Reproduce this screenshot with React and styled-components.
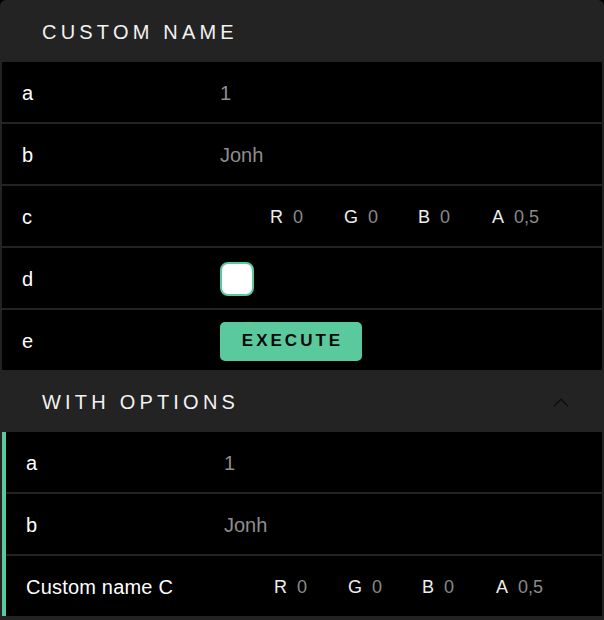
import React from 'react';
import styled, { createGlobalStyle } from 'styled-components';

const GlobalStyle = createGlobalStyle`
  html, body {
    margin: 0;
    background: #000;
  }
  body {
    font-family: "Liberation Sans", Arial, sans-serif;
  }
`;

const GREEN = '#5bc99e';

const Panel = styled.div`
  background: #232323;
  border-radius: 6px 6px 0 0;
  padding: 0 2px 4px;
  width: 604px;
  box-sizing: border-box;
`;

const Header = styled.div`
  height: 62px;
  box-sizing: border-box;
  display: flex;
  align-items: center;
  justify-content: space-between;
  padding: 2px 33px 0 40px;
`;

const Title = styled.span`
  color: #f2f2f2;
  font-size: 20px;
  letter-spacing: 4.2px;
  text-transform: uppercase;
`;

const Rows = styled.div`
  display: flex;
  flex-direction: column;
  gap: 2px;
  border-left: ${p => (p.accent ? `4px solid ${GREEN}` : 'none')};
`;

const Row = styled.div`
  height: 60px;
  box-sizing: border-box;
  background: #000;
  display: grid;
  grid-template-columns: 198px 1fr;
  align-items: center;
  padding: 2px 0 0 20px;
`;

const Label = styled.span`
  color: #fff;
  font-size: 20px;
  letter-spacing: 0.2px;
`;

const Value = styled.span`
  color: #8e8e8e;
  font-size: 20px;
`;

const ColorFields = styled.div`
  display: flex;
  padding-left: 50px;
`;

const Channel = styled.div`
  width: 74px;
  flex-shrink: 0;
  display: flex;
  align-items: baseline;
  gap: 10px;
  font-size: 18px;
`;

const ChannelName = styled.span`
  color: #eee;
`;

const ChannelValue = styled.span`
  color: #8a8a8a;
`;

const Checkbox = styled.div`
  width: 34px;
  height: 34px;
  box-sizing: border-box;
  border: 2px solid ${GREEN};
  border-radius: 8px;
  background: #fff;
`;

const Button = styled.button`
  width: 142px;
  height: 39px;
  border: none;
  border-radius: 5px;
  background: ${GREEN};
  color: #0a0a0a;
  font-family: "Liberation Sans", Arial, sans-serif;
  font-weight: bold;
  font-size: 17px;
  letter-spacing: 3px;
  padding: 0 0 0 3px;
  cursor: pointer;
`;

const Chevron = () => (
  <svg width="16" height="9" viewBox="0 0 16 9">
    <path d="M1 8.2 L8 1.2 L15 8.2" fill="none" stroke="#0d0d0d" strokeWidth="1.4" />
  </svg>
);

function ColorValue({ r, g, b, a }) {
  const channels = [['R', r], ['G', g], ['B', b], ['A', a]];
  return (
    <ColorFields>
      {channels.map(([name, val]) => (
        <Channel key={name}>
          <ChannelName>{name}</ChannelName>
          <ChannelValue>{val}</ChannelValue>
        </Channel>
      ))}
    </ColorFields>
  );
}

export default function App() {
  return (
    <>
      <GlobalStyle />
      <Panel>
        <Header>
          <Title>Custom name</Title>
        </Header>
        <Rows>
          <Row>
            <Label>a</Label>
            <Value>1</Value>
          </Row>
          <Row>
            <Label>b</Label>
            <Value>Jonh</Value>
          </Row>
          <Row>
            <Label>c</Label>
            <ColorValue r="0" g="0" b="0" a="0,5" />
          </Row>
          <Row>
            <Label>d</Label>
            <Checkbox />
          </Row>
          <Row>
            <Label>e</Label>
            <div>
              <Button>EXECUTE</Button>
            </div>
          </Row>
        </Rows>

        <Header>
          <Title>With options</Title>
          <Chevron />
        </Header>
        <Rows accent>
          <Row>
            <Label>a</Label>
            <Value>1</Value>
          </Row>
          <Row>
            <Label>b</Label>
            <Value>Jonh</Value>
          </Row>
          <Row>
            <Label>Custom name C</Label>
            <ColorValue r="0" g="0" b="0" a="0,5" />
          </Row>
        </Rows>
      </Panel>
    </>
  );
}
